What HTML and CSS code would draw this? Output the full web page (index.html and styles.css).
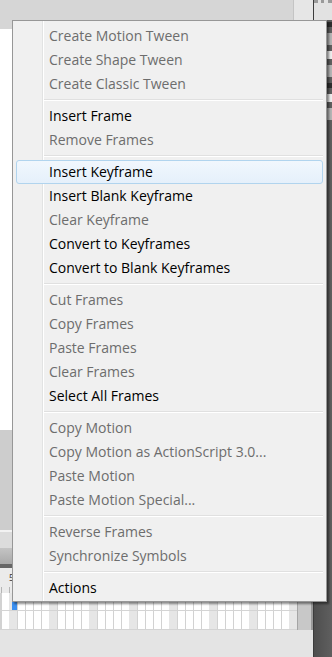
FILE: index.html
```html
<!DOCTYPE html>
<html lang="en">
<head>
    <meta charset="UTF-8">
    <meta name="viewport" content="width=device-width, initial-scale=1.0">
    <title>Timeline context menu</title>
    <link rel="stylesheet" href="styles.css">
</head>
<body>
    <div class="app">
        <div class="main">
            <div class="topbar">
                <div class="tb-fill"></div>
                <div class="tb-panel"></div>
            </div>
            <div class="stage"></div>
            <div class="pasteboard"></div>
            <div class="tl-head"></div>
            <div class="tl-layers"></div>
            <div class="ruler"><span class="ruler-num">5</span></div>
            <div class="grid">
                <div class="frames">
                    <div class="frame-row"><span class="playhead"></span></div>
                    <div class="frame-row"></div>
                </div>
                <div class="vscroll"></div>
            </div>
            <div class="statusbar"></div>
        </div>
        <div class="side">
            <div class="side-top"></div>
            <div class="tools">
                <div class="tool dark"></div>
                <div class="tool"></div>
                <div class="tool light"></div>
                <div class="tool"></div>
                <div class="tool dark"></div>
                <div class="tool light"></div>
                <div class="tool"></div>
            </div>
        </div>
    </div>

    <!-- right-click menu over the timeline -->
    <div class="menu">
        <div class="item disabled">Create Motion Tween</div>
        <div class="item disabled">Create Shape Tween</div>
        <div class="item disabled">Create Classic Tween</div>
        <div class="sep"></div>
        <div class="item">Insert Frame</div>
        <div class="item disabled">Remove Frames</div>
        <div class="sep"></div>
        <div class="item hover">Insert Keyframe</div>
        <div class="item">Insert Blank Keyframe</div>
        <div class="item disabled">Clear Keyframe</div>
        <div class="item">Convert to Keyframes</div>
        <div class="item">Convert to Blank Keyframes</div>
        <div class="sep"></div>
        <div class="item disabled">Cut Frames</div>
        <div class="item disabled">Copy Frames</div>
        <div class="item disabled">Paste Frames</div>
        <div class="item disabled">Clear Frames</div>
        <div class="item">Select All Frames</div>
        <div class="sep"></div>
        <div class="item disabled">Copy Motion</div>
        <div class="item disabled">Copy Motion as ActionScript 3.0...</div>
        <div class="item disabled">Paste Motion</div>
        <div class="item disabled">Paste Motion Special...</div>
        <div class="sep"></div>
        <div class="item disabled">Reverse Frames</div>
        <div class="item disabled">Synchronize Symbols</div>
        <div class="sep"></div>
        <div class="item">Actions</div>
    </div>
</body>
</html>
```

FILE: styles.css
```css
* {
    box-sizing: border-box;
}
html, body {
    margin: 0;
    padding: 0;
}
body {
    width: 332px;
    height: 657px;
    overflow: hidden;
    position: relative;
    font-family: 'Open Sans', 'Noto Sans', sans-serif;
    background-color: #e4e4e4;
}
.app {
    display: flex;
    height: 657px;
}
.main {
    flex: 1;
    display: flex;
    flex-direction: column;
}
.topbar {
    height: 29px;
    display: flex;
}
.tb-fill {
    flex: 1;
    background-color: #d6d6d6;
}
.tb-panel {
    width: 20px;
    height: 20px;
    background-color: #e6e6e6;
    border-left: 1px solid #c4c4c4;
}
.stage {
    height: 401px;
    background-color: #ffffff;
}
.pasteboard {
    height: 100px;
    background-color: #cdcdcd;
}
.tl-head {
    height: 18px;
    background-color: #dcdcdc;
    border-top: 2px solid #f2f2f2;
}
.tl-layers {
    height: 20px;
    background: linear-gradient(#c4c4c4, #a9a9a9);
    border-bottom: 4px solid #666666;
}
.ruler {
    height: 25px;
    position: relative;
    background-color: #ebebeb;
    background-image: repeating-linear-gradient(90deg, #b5b5b5 0 1px, transparent 1px 8px);
    background-size: 100% 6px;
    background-position: 1px 100%;
    background-repeat: no-repeat;
}
.ruler-num {
    position: absolute;
    left: 9px;
    top: 5px;
    font-size: 9px;
    line-height: 10px;
    color: #333;
}
.grid {
    height: 37px;
    display: flex;
}
.frames {
    flex: 1;
    display: flex;
    flex-direction: column;
    background-color: #ffffff;
    background-image:
        repeating-linear-gradient(90deg, transparent 0 9px, #e6e6e6 9px 17px, transparent 17px 40px),
        repeating-linear-gradient(90deg, #d2d2d2 0 1px, transparent 1px 8px);
    background-position: 0 0, 1px 0;
    border-bottom: 1px solid #d4d4d4;
}
.frame-row {
    height: 18px;
    position: relative;
    border-bottom: 1px solid #d4d4d4;
}
.frame-row + .frame-row {
    border-bottom: none;
}
.playhead {
    position: absolute;
    left: 12px;
    top: 0;
    width: 5px;
    height: 17px;
    background-color: #3b8ff0;
}
.vscroll {
    width: 16px;
    background-color: #c8c8c8;
    border-left: 1px solid #a5a5a5;
    border-right: 2px solid #9a9a9a;
}
.statusbar {
    flex: 1;
    background-color: #e4e4e4;
}
.side {
    width: 19px;
    display: flex;
    flex-direction: column;
    background: linear-gradient(90deg, #4e4e4e, #5f5f5f);
    border-left: 1px solid #3c3c3c;
}
.side-top {
    height: 20px;
    background-color: #e2e2e2;
    border-top: 3px dotted #9a9a9a;
}
.tools {
    display: flex;
    flex-direction: column;
    gap: 6px;
    padding: 2px 0 0 12px;
}
.tool {
    height: 12px;
    background-color: #b4b4b4;
}
.tool.dark {
    background-color: #2e2e2e;
    height: 5px;
}
.tool.light {
    background-color: #ececec;
    height: 8px;
}

/* context menu */
.menu {
    position: absolute;
    left: 12px;
    top: 20px;
    width: 315px;
    padding: 3px 3px 1px;
    background-color: #f0f0f0;
    border: 1px solid #979797;
    box-shadow: 2px 2px 2px rgba(0, 0, 0, 0.45);
    background-image: linear-gradient(90deg, transparent 27px, #e2e3e3 27px 28px, #ffffff 28px 29px, transparent 29px);
    background-origin: border-box;
    background-position: 3px 0;
    background-repeat: no-repeat;
}
.item {
    height: 24px;
    line-height: 22px;
    padding-left: 32px;
    font-size: 14px;
    color: #000000;
    white-space: nowrap;
    border: 1px solid transparent;
    border-radius: 3px;
}
.item.disabled {
    color: #6d6d6d;
}
.item.hover {
    background: linear-gradient(#f1f7fd, #e5f0fb);
    border-color: #b1d4ee;
}
.sep {
    height: 8px;
    margin-left: 28px;
    padding-top: 3px;
}
.sep::before {
    content: "";
    display: block;
    height: 1px;
    background-color: #e0e0e0;
    border-bottom: 1px solid #ffffff;
    box-sizing: content-box;
}
```
